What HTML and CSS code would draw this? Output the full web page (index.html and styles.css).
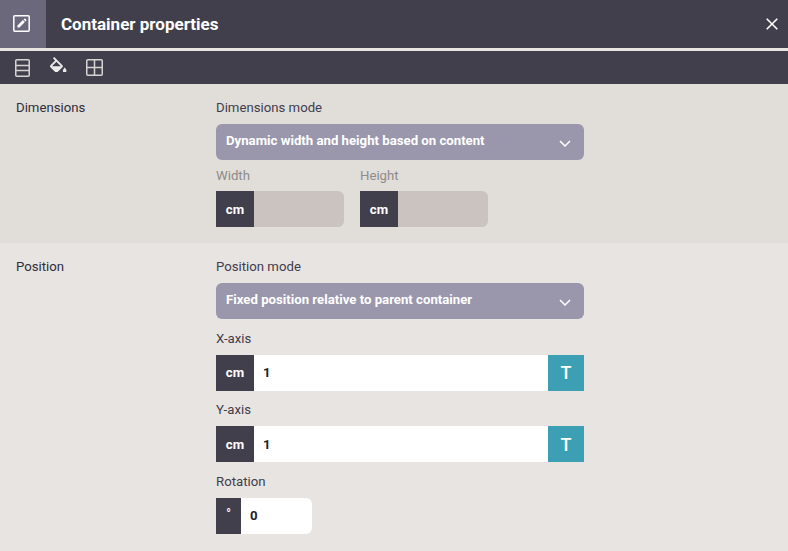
FILE: index.html
```html
<!DOCTYPE html>
<html lang="en">
<head>
<meta charset="utf-8">
<title>Container properties</title>
<link rel="stylesheet" href="styles.css">
</head>
<body>
<header class="titlebar">
  <div class="title-icon">
    <svg width="17" height="17" viewBox="0 0 17 17" fill="none">
      <rect x=".8" y=".8" width="15.400" height="15.400" rx="1" stroke="#fff" stroke-width="1.500"/>
      <path d="M4.500 12.500v-2l5.400-5.400 2 2-5.400 5.400z" fill="#fff"/>
      <path d="M10.600 4.400l.7-.7a.7.7 0 0 1 1 0l1 1a.7.7 0 0 1 0 1l-.7.7z" fill="#fff"/>
    </svg>
  </div>
  <h1 class="title">Container properties</h1>
  <button class="close" aria-label="Close">
    <svg width="12" height="12" viewBox="0 0 12 12"><path d="M.7.7l10.600 10.600M11.300.7L.7 11.300" stroke="#fff" stroke-width="1.600" fill="none"/></svg>
  </button>
</header>
<nav class="toolbar">
  <svg class="tool" width="15" height="18" viewBox="0 0 15 18" fill="none" stroke="#d6d3d3" stroke-width="1.500"><rect x=".75" y=".75" width="13.500" height="16.500" rx="1"/><path d="M1 6.500h13M1 11.500h13"/></svg>
  <svg class="tool tool-fill" width="16.500" height="15.600" viewBox="3 0 18 17"><path fill="#ecebeb" d="M16.560 8.940L7.620 0 6.210 1.410l2.380 2.380-5.150 5.150c-.59.59-.59 1.540 0 2.120l5.500 5.500c.29.29.68.44 1.060.44s.77-.15 1.060-.44l5.500-5.500c.59-.58.59-1.530 0-2.120zM5.210 10L10 5.210 14.790 10H5.210zM19 11.500s-2 2.170-2 3.500c0 1.100.9 2 2 2s2-.9 2-2c0-1.330-2-3.500-2-3.500z"/></svg>
  <svg class="tool tool-grid" width="17" height="17" viewBox="0 0 17 17" fill="none" stroke="#d6d3d3" stroke-width="1.500"><rect x=".75" y=".75" width="15.500" height="15.500" rx="1"/><path d="M8.500 1v15M1 8.500h15"/></svg>
</nav>
<main>
  <section class="section section-dim">
    <div class="section-name">Dimensions</div>
    <div class="fields">
      <label class="label">Dimensions mode</label>
      <div class="select">
        <span>Dynamic width and height based on content</span>
        <svg width="12" height="7" viewBox="0 0 12 7" fill="none"><path d="M1 1l5 5 5-5" stroke="#fff" stroke-width="1.500"/></svg>
      </div>
      <div class="pair">
        <div class="pair-item">
          <label class="label label-off">Width</label>
          <div class="input input-off input-small"><span class="unit">cm</span></div>
        </div>
        <div class="pair-item">
          <label class="label label-off">Height</label>
          <div class="input input-off input-small"><span class="unit">cm</span></div>
        </div>
      </div>
    </div>
  </section>
  <section class="section section-pos">
    <div class="section-name">Position</div>
    <div class="fields">
      <label class="label">Position mode</label>
      <div class="select">
        <span>Fixed position relative to parent container</span>
        <svg width="12" height="7" viewBox="0 0 12 7" fill="none"><path d="M1 1l5 5 5-5" stroke="#fff" stroke-width="1.500"/></svg>
      </div>
      <label class="label label-row">X-axis</label>
      <div class="input"><span class="unit">cm</span><span class="value">1</span><span class="type-btn">T</span></div>
      <label class="label label-row">Y-axis</label>
      <div class="input"><span class="unit">cm</span><span class="value">1</span><span class="type-btn">T</span></div>
      <label class="label label-row">Rotation</label>
      <div class="input input-rot"><span class="unit unit-deg">°</span><span class="value">0</span></div>
    </div>
  </section>
</main>
</body>
</html>
```
FILE: styles.css
```css
* { box-sizing: border-box; }
html, body { margin: 0; padding: 0; }
body {
  width: 788px;
  height: 551px;
  overflow: hidden;
  background: #e8e4e1;
  font-family: Roboto, "Liberation Sans", sans-serif;
  font-size: 13.200px;
  color: #3f3d4c;
}
.titlebar {
  height: 48px;
  display: flex;
  align-items: center;
  background: #423f4d;
  color: #fff;
}
.title-icon {
  width: 46px;
  height: 48px;
  padding: 0 4px 2px 0;
  background: #6b687c;
  display: flex;
  align-items: center;
  justify-content: center;
}
.title {
  flex: 1;
  margin: 0 0 0 15px;
  font-size: 17px;
  font-weight: 700;
  line-height: 44px;
  height: 44px;
}
.close {
  width: 32px;
  height: 48px;
  padding: 0;
  border: 0;
  background: none;
  display: flex;
  align-items: center;
  justify-content: center;
}
.toolbar {
  margin-top: 3px;
  height: 33px;
  background: #423f4d;
  display: flex;
  align-items: center;
  padding-left: 15px;
}
.tool-fill { margin: 0 19.500px 6px 20px; }
.section {
  display: flex;
  padding: 16px 0 16px 16px;
}
.section-dim { background: #e1ddd9; }
.section-pos { background: #e8e4e1; }
.section-name {
  width: 200px;
  line-height: 16px;
  color: #2f2d3a;
}
.fields { width: 368px; }
.label {
  display: block;
  line-height: 16px;
  margin-bottom: 8px;
}
.label-row { margin-top: 11.600px; }
.label-off { color: #8e8b8b; margin-bottom: 7px; }
.select {
  height: 36px;
  border-radius: 6px;
  background: #9a97ac;
  color: #fff;
  font-weight: 700;
  font-size: 13.200px;
  padding: 0 13px 3px 10px;
  display: flex;
  align-items: center;
  justify-content: space-between;
}
.select svg { margin-top: 5px; }
.pair {
  display: flex;
  gap: 16px;
  margin-top: 8px;
}
.pair-item { width: 128px; }
.input {
  height: 36px;
  display: flex;
  align-items: center;
  background: #fff;
  overflow: hidden;
}
.input-off { background: #cbc3bf; }
.input-small { border-radius: 0 6px 6px 0; }
.input-rot { width: 96px; border-radius: 0 6px 6px 0; }
.unit {
  width: 38px;
  height: 100%;
  background: #423f4d;
  color: #fff;
  font-weight: 700;
  font-size: 13.200px;
  display: flex;
  align-items: center;
  justify-content: center;
}
.unit-deg {
  width: 25px;
  padding-bottom: 4px;
  font-size: 12px;
}
.value {
  flex: 1;
  padding-left: 9px;
  font-weight: 700;
  font-size: 13.200px;
  color: #222129;
}
.type-btn {
  width: 36px;
  height: 100%;
  background: #3d9fb3;
  color: #fff;
  font-weight: 500;
  font-size: 18px;
  display: flex;
  align-items: center;
  justify-content: center;
}
```
